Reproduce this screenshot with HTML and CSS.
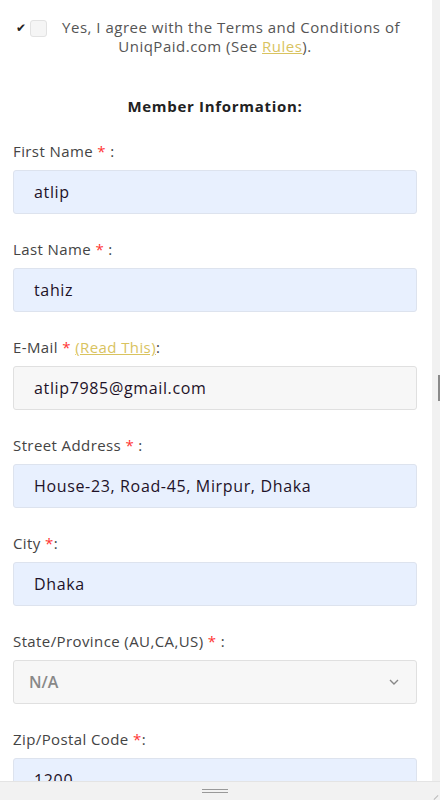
FILE: index.html
```html
<!DOCTYPE html>
<html>
<head>
<meta charset="utf-8">
<link rel="stylesheet" href="styles.css">
</head>
<body>
<div class="page">
  <p class="agree"><span class="tick">✔</span><span class="box"></span>Yes, I agree with the Terms and Conditions of<span class="spacer"></span><br>UniqPaid.com (See <a href="#" class="gold">Rules</a>).</p>
  <h3 class="section">Member Information:</h3>
  <div class="field">
    <label class="lbl">First Name <span class="req">*</span> :</label>
    <div class="input auto">atlip</div>
  </div>
  <div class="field">
    <label class="lbl">Last Name <span class="req">*</span> :</label>
    <div class="input auto">tahiz</div>
  </div>
  <div class="field">
    <label class="lbl">E-Mail <span class="req">*</span> <a href="#" class="gold">(Read This)</a>:</label>
    <div class="input plain">atlip7985@gmail.com</div>
  </div>
  <div class="field">
    <label class="lbl">Street Address <span class="req">*</span> :</label>
    <div class="input auto">House-23, Road-45, Mirpur, Dhaka</div>
  </div>
  <div class="field">
    <label class="lbl">City <span class="req">*</span>:</label>
    <div class="input auto">Dhaka</div>
  </div>
  <div class="field">
    <label class="lbl">State/Province (AU,CA,US) <span class="req">*</span> :</label>
    <div class="input select"><span>N/A</span>
      <svg width="12" height="8" viewBox="0 0 12 8"><path d="M2 2 L6 6 L10 2" fill="none" stroke="#888" stroke-width="1.4"/></svg>
    </div>
  </div>
  <div class="field">
    <label class="lbl">Zip/Postal Code <span class="req">*</span>:</label>
    <div class="input auto">1200</div>
  </div>
</div>
<div class="scrollbar"><div class="thumb"></div></div>
<div class="bottombar"><div class="handle"></div><div class="grip"></div></div>
</body>
</html>
```
FILE: styles.css
```css
html, body {
  margin: 0;
  padding: 0;
  height: 100%;
  overflow: hidden;
  background: #fff;
}
body {
  font-family: "Open Sans", "DejaVu Sans", sans-serif;
  color: #444;
}
.page {
  width: 432px;
  box-sizing: border-box;
  padding: 0 15px 0 13px;
}
.agree {
  margin: 0;
  padding-top: 18px;
  text-align: center;
  font-size: 15px;
  line-height: 19px;
  letter-spacing: 0.5px;
  color: #555;
}
.tick {
  display: inline-block;
  font-size: 12px;
  color: #222;
  letter-spacing: 0;
  margin-right: 4px;
  vertical-align: 1px;
}
.box {
  display: inline-block;
  width: 15px;
  height: 15px;
  border: 1px solid #e2e2e2;
  border-radius: 3px;
  background: #f5f5f5;
  vertical-align: -4px;
  margin-right: 15px;
}
.spacer {
  display: inline-block;
  width: 14px;
}
.gold {
  color: #d9c35f;
  text-decoration: underline;
}
.section {
  margin: 40px 0 0;
  text-align: center;
  font-size: 15px;
  font-weight: bold;
  letter-spacing: 0.7px;
  color: #222;
  line-height: 20px;
}
.field {
  margin-top: 25px;
}
.lbl {
  display: block;
  font-size: 15px;
  line-height: 20px;
  letter-spacing: 0.4px;
  color: #444;
}
.req {
  color: #f33;
}
.input {
  margin-top: 9px;
  height: 44px;
  box-sizing: border-box;
  border: 1px solid #e0e0e0;
  border-radius: 3px;
  display: flex;
  align-items: center;
  padding-left: 20px;
  font-size: 16px;
  letter-spacing: 0.65px;
  color: #1e1228;
}
.auto {
  background: #e8f0fe;
  border-color: #dde3ee;
}
.plain {
  background: #f7f7f7;
}
.select {
  background: #f7f7f7;
  justify-content: space-between;
  padding-left: 15px;
  padding-right: 16px;
  color: #888;
  font-weight: 600;
  letter-spacing: 0;
}
.scrollbar {
  position: fixed;
  top: 0;
  right: 0;
  width: 8px;
  height: 782px;
  background: #f1f1f1;
}
.thumb {
  position: absolute;
  right: 0;
  top: 375px;
  width: 2px;
  height: 26px;
  background: #8a8a8a;
}
.bottombar {
  position: fixed;
  left: 0;
  right: 0;
  bottom: 0;
  height: 18px;
  background: #f2f2f2;
  border-top: 1px solid #e4e4e4;
}
.handle {
  position: absolute;
  left: 202px;
  top: 7px;
  width: 26px;
  height: 2px;
  border-top: 1px solid #999;
  border-bottom: 1px solid #999;
}
.grip {
  position: absolute;
  right: 1px;
  bottom: 2px;
  width: 6px;
  height: 1px;
  background: #bbb;
  transform: rotate(-45deg);
}
```
